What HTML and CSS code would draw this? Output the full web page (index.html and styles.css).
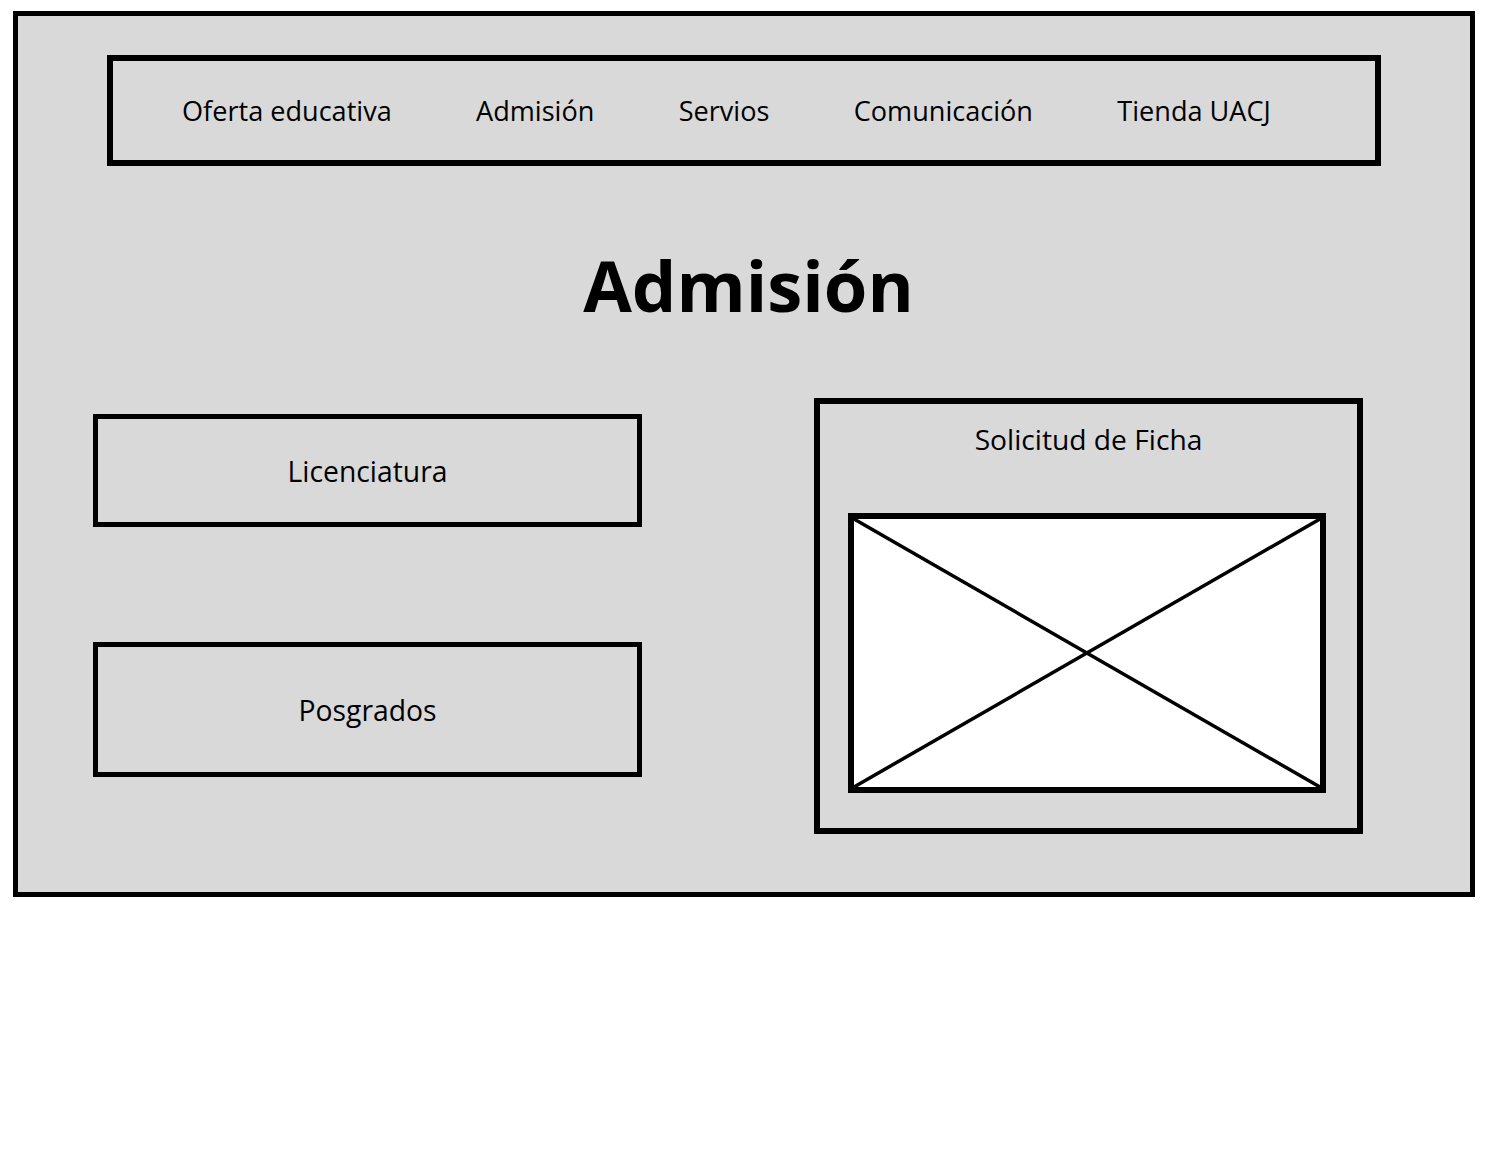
FILE: index.html
```html
<!DOCTYPE html>
<html lang="es">
<head>
    <meta charset="utf-8">
    <meta name="viewport" content="width=device-width, initial-scale=1.0">
    <title>Admisión</title>
    <link rel="stylesheet" href="styles.css">
</head>
<body>
    <div class="frame">
        <nav class="menu">
            <a href="#">Oferta educativa</a>
            <a href="#">Admisión</a>
            <a href="#">Servios</a>
            <a href="#">Comunicación</a>
            <a href="#">Tienda UACJ</a>
        </nav>

        <h1 class="title">Admisión</h1>

        <section class="content">
            <div class="options">
                <a class="option option-lic" href="#">Licenciatura</a>
                <a class="option option-pos" href="#">Posgrados</a>
            </div>
            <div class="ficha">
                <p class="ficha-label">Solicitud de Ficha</p>
                <div class="placeholder">
                    <svg viewBox="0 0 466 268" preserveAspectRatio="none">
                        <line x1="0" y1="0" x2="466" y2="268"/>
                        <line x1="466" y1="0" x2="0" y2="268"/>
                    </svg>
                </div>
            </div>
        </section>
    </div>
</body>
</html>
```

FILE: styles.css
```css
body {
    margin: 0;
    font-family: "Open Sans", "DejaVu Sans", sans-serif;
    color: #000;
    background-color: #fff;
}
a {
    color: inherit;
    text-decoration: none;
}
.frame {
    box-sizing: border-box;
    width: 1462px;
    height: 886px;
    margin: 11px 0 0 13px;
    padding-top: 39px;
    border: 5px solid #000;
    background-color: #d9d9d9;
}
.menu {
    box-sizing: border-box;
    display: flex;
    align-items: center;
    gap: 84.3px;
    width: 1274px;
    height: 111px;
    margin: 0 auto;
    padding-left: 69px;
    border: 6px solid #000;
    font-size: 27.1px;
}
.title {
    margin: 79px 0 0;
    padding-left: 9px;
    font-size: 70.5px;
    line-height: 80px;
    font-weight: 700;
    text-align: center;
}
.content {
    display: grid;
    grid-template-columns: 549px 549px;
    column-gap: 172px;
    margin-top: 73px;
    padding-left: 75px;
}
.options {
    display: flex;
    flex-direction: column;
    padding-top: 16px;
}
.option {
    box-sizing: border-box;
    display: flex;
    align-items: center;
    justify-content: center;
    border: 5px solid #000;
    font-size: 28.3px;
}
.option-lic {
    height: 113px;
}
.option-pos {
    height: 135px;
    margin-top: 115px;
}
.ficha {
    box-sizing: border-box;
    height: 436px;
    padding-top: 16px;
    border: 6px solid #000;
}
.ficha-label {
    margin: 0;
    font-size: 28.2px;
    text-align: center;
}
.placeholder {
    box-sizing: border-box;
    width: 478px;
    height: 280px;
    margin: 55px 0 0 28px;
    border: 6px solid #000;
    background-color: #fff;
}
.placeholder svg {
    display: block;
    width: 100%;
    height: 100%;
}
.placeholder line {
    stroke: #000;
    stroke-width: 3.5;
}
```
